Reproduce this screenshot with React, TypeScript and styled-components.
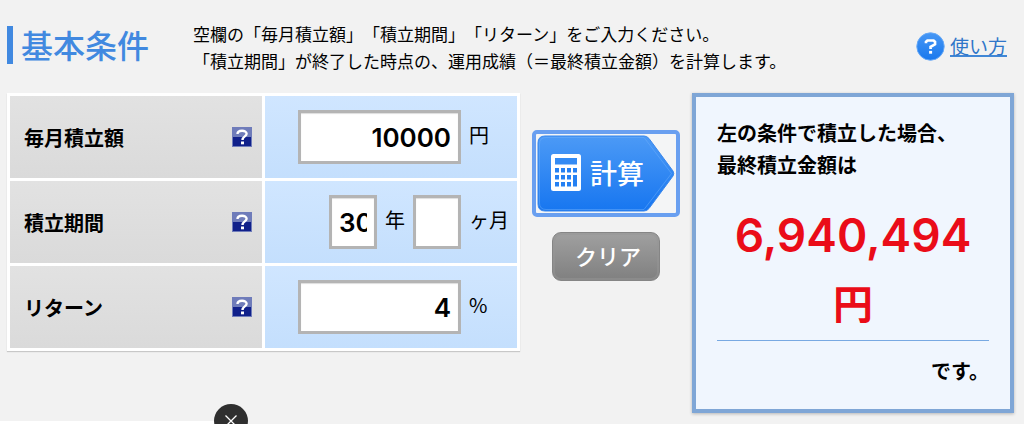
import React, { useState } from "react";
import styled, { createGlobalStyle } from "styled-components";

const GlobalStyle = createGlobalStyle`
  * { box-sizing: border-box; }
  body {
    margin: 0;
    background: #f2f2f2;
    color: #000;
    font-family: "Noto Sans CJK JP", sans-serif;
    text-spacing-trim: space-all;
  }
`;

const Page = styled.div`
  padding: 20px 10px 8px 7px;
`;

const Header = styled.header`
  display: flex;
  align-items: flex-start;
  height: 73px;
`;

const Title = styled.h1`
  flex: none;
  width: 186px;
  margin: 6px 0 0;
  padding: 0 0 2px 8px;
  border-left: 6px solid #4189e0;
  color: #4189e0;
  font-size: 32px;
  line-height: 36px;
  font-weight: 500;
`;

const Lead = styled.p`
  flex: 1;
  margin: 0;
  font-size: 17px;
  line-height: 27px;
`;

const HelpLink = styled.a`
  display: flex;
  align-items: center;
  gap: 5px;
  margin: 12px 7px 0 0;
  color: #2f76c9;
  font-size: 19px;
  line-height: 28px;
  text-decoration: none;

  span {
    line-height: 18px;
    border-bottom: 2px solid #4187d6;
  }
`;

const Columns = styled.main`
  display: grid;
  grid-template-columns: minmax(0, 513fr) 172px minmax(0, 322fr);
  align-items: start;
`;

const Conditions = styled.form`
  display: grid;
  gap: 3px;
  padding: 3px;
  background: #fff;
  box-shadow: 0 1px 1px #c8c8c8;
`;

const Row = styled.div`
  display: grid;
  grid-template-columns: minmax(0, 252fr) minmax(0, 253fr);
  gap: 3px;
  height: 82px;
`;

const LabelCell = styled.div`
  display: flex;
  align-items: center;
  justify-content: space-between;
  padding: 0 10px 0 14px;
  background: linear-gradient(#e2e2e2, #dadada);
  font-size: 20px;
  font-weight: 700;
`;

const HelpButton = styled.button`
  display: block;
  width: 20px;
  height: 20px;
  padding: 0;
  border: 0;
  background: none;
  cursor: pointer;

  svg { display: block; }
`;

const FieldCell = styled.div`
  display: grid;
  grid-template-columns: minmax(0, 1fr) 48px;
  gap: 8px;
  align-items: center;
  background: linear-gradient(#d0e6ff, #c4dffd);
`;

const Fields = styled.div`
  display: flex;
  align-items: center;
  justify-content: flex-end;
  gap: 8px;
`;

const Unit = styled.span`
  padding-bottom: 5px;
  font-size: 20px;
  line-height: 28px;
  white-space: nowrap;
`;

const NumberInput = styled.input<{ $short?: boolean }>`
  width: ${(p) => (p.$short ? 48 : 163)}px;
  height: 54px;
  padding: 0 7px;
  border: 3px solid #b4b4b4;
  border-radius: 0;
  background: #fff;
  box-shadow: inset 0 1px 1px #ddd;
  color: #000;
  font: 600 26px Inter, sans-serif;
  text-align: right;
`;

const Actions = styled.div`
  display: flex;
  flex-direction: column;
  align-items: center;
  gap: 15px;
  padding-top: 37px;
`;

const CalcButton = styled.button`
  position: relative;
  display: flex;
  align-items: center;
  width: 148px;
  height: 87px;
  padding: 0 0 2px 15px;
  border: 4px solid #699ff0;
  border-radius: 5px;
  background: #f4f5f6;
  color: #fff;
  font: 500 27px "Noto Sans CJK JP", sans-serif;
  cursor: pointer;
`;

const ArrowShape = styled.svg`
  position: absolute;
  inset: 1px;
  width: 138px;
  height: 77px;
`;

const CalcFace = styled.span`
  position: relative;
  display: flex;
  align-items: center;
  gap: 9px;
`;

const ClearButton = styled.button`
  width: 108px;
  height: 49px;
  padding: 0 0 4px 4px;
  border: 1px solid #858585;
  border-radius: 9px;
  background: linear-gradient(#a0a0a0, #808080);
  box-shadow: inset 0 0 0 2px rgba(150, 150, 150, 0.5);
  color: #fff;
  font: 500 22px "Noto Sans CJK JP", sans-serif;
  cursor: pointer;
`;

const Result = styled.section`
  min-height: 320px;
  padding: 20px 21px 18px;
  border: 4px solid #7fa6d6;
  background: #f0f6fe;
  box-shadow: 0 1px 3px rgba(0, 0, 0, 0.25);
  font-size: 20px;
  line-height: 32px;
  font-weight: 700;

  p { margin: 0; }
`;

const Amount = styled.output`
  display: block;
  margin: 19px 0 0;
  border-bottom: 1px solid #78a9e2;
  color: #ea0c18;
  font: 600 46px/70px Inter, "Noto Sans CJK JP", sans-serif;
  text-align: center;

  span {
    display: block;
    font-size: 40px;
    font-weight: 700;
  }
`;

const Closing = styled.p`
  padding-top: 14px;
  text-align: right;
`;

const Banner = styled.aside`
  position: fixed;
  left: 0;
  bottom: 0;
  width: 231px;
  height: 3px;
  background: #fff;
`;

const CloseButton = styled.button`
  position: absolute;
  top: -17px;
  right: -17px;
  width: 34px;
  height: 34px;
  padding: 0;
  border: 0;
  border-radius: 50%;
  background: #2f2f2f;
  cursor: pointer;

  svg { display: block; }
`;

const HelpSquare = () => (
  <svg width="20" height="20" viewBox="0 0 20 20" aria-hidden="true">
    <rect width="20" height="20" fill="#6f7cba" />
    <rect x="1" y="10" width="18" height="9" fill="#10208a" />
    <path d="M5.5 7C5.5 2.8 14.600 2.800 14.600 6.700C14.600 9.500 10.500 9.300 10.500 13" fill="none" stroke="#fff" strokeWidth="2.4" />
    <rect x="9" y="14.500" width="3" height="2.800" fill="#fff" />
  </svg>
);

const HelpCircle = () => (
  <svg width="29" height="29" viewBox="0 0 29 29" aria-hidden="true">
    <defs>
      <linearGradient id="help-fill" x2="0" y2="1">
        <stop stopColor="#4797f5" />
        <stop offset="1" stopColor="#1878ed" />
      </linearGradient>
    </defs>
    <circle cx="14.5" cy="14.5" r="13.7" fill="url(#help-fill)" stroke="#65a8f7" strokeWidth="1" />
    <path d="M10 11.2V9.8L11.4 8.5H17.6L19 9.8V12.3L14.6 14.8V17" fill="none" stroke="#fff" strokeWidth="2.7" />
    <rect x="13.1" y="18.9" width="3" height="2.8" fill="#fff" />
  </svg>
);

const keyColumns = [4, 10, 16, 22];
const keyRows = [14, 21, 28];

const Calculator = () => (
  <svg width="30" height="37" viewBox="0 0 30 37" aria-hidden="true">
    <rect width="30" height="37" rx="2.5" fill="#fff" />
    <rect x="4" y="4" width="22" height="6.5" fill="#348bf4" />
    {keyRows.map((y, r) =>
      keyColumns.map((x, c) =>
        r === 2 && c === 3 ? null : (
          <rect key={`${x}-${y}`} x={x} y={y} width="4" height={r === 1 && c === 3 ? 11.5 : 4.5} fill="#2581f3" />
        )
      )
    )}
  </svg>
);

interface RowProps {
  id: string;
  label: string;
  unit: string;
  children: React.ReactNode;
}

const ConditionRow = ({ id, label, unit, children }: RowProps) => (
  <Row>
    <LabelCell>
      <label htmlFor={id}>{label}</label>
      <HelpButton type="button" aria-label={`${label}の説明`}>
        <HelpSquare />
      </HelpButton>
    </LabelCell>
    <FieldCell>
      <Fields>{children}</Fields>
      <Unit>{unit}</Unit>
    </FieldCell>
  </Row>
);

export default function App() {
  const [values, setValues] = useState({ amount: "10000", years: "30", months: "", rate: "4" });
  const [total, setTotal] = useState("6,940,494");

  const bind = (key: keyof typeof values) => ({
    value: values[key],
    onChange: (e: React.ChangeEvent<HTMLInputElement>) => setValues({ ...values, [key]: e.target.value }),
  });

  const calculate = () => {
    const months = Number(values.years) * 12 + Number(values.months);
    const rate = Number(values.rate) / 1200;
    const amount = Number(values.amount);
    const sum = rate ? (amount * (Math.pow(1 + rate, months) - 1)) / rate : amount * months;
    setTotal(Math.floor(sum).toLocaleString("en-US"));
  };

  return (
    <>
      <GlobalStyle />
      <Page>
        <Header>
          <Title>基本条件</Title>
          <Lead>
            空欄の「毎月積立額」「積立期間」「リターン」をご入力ください。
            <br />
            「積立期間」が終了した時点の、運用成績（＝最終積立金額）を計算します。
          </Lead>
          <HelpLink href="#help">
            <HelpCircle />
            <span>使い方</span>
          </HelpLink>
        </Header>
        <Columns>
          <Conditions id="conditions" onSubmit={(e) => { e.preventDefault(); calculate(); }}>
            <ConditionRow id="amount" label="毎月積立額" unit="円">
              <NumberInput id="amount" inputMode="numeric" {...bind("amount")} />
            </ConditionRow>
            <ConditionRow id="years" label="積立期間" unit="ヶ月">
              <NumberInput id="years" $short inputMode="numeric" {...bind("years")} />
              <Unit>年</Unit>
              <NumberInput $short aria-label="積立期間（ヶ月）" inputMode="numeric" {...bind("months")} />
            </ConditionRow>
            <ConditionRow id="rate" label="リターン" unit="%">
              <NumberInput id="rate" inputMode="decimal" {...bind("rate")} />
            </ConditionRow>
          </Conditions>
          <Actions>
            <CalcButton type="submit" form="conditions">
              <ArrowShape viewBox="0 0 138 77" aria-hidden="true">
                <defs>
                  <linearGradient id="calc-fill" x2="0" y2="1">
                    <stop stopColor="#4c9af6" />
                    <stop offset="1" stopColor="#1776f0" />
                  </linearGradient>
                </defs>
                <path
                  d="M8 1H107Q110 1 112 3.5L136 36Q137.5 38.5 136 41L112 73.5Q110 76 107 76H8Q1 76 1 69V8Q1 1 8 1Z"
                  fill="url(#calc-fill)"
                  stroke="#3a87ec"
                />
                <path d="M9 2.5H107L134.5 38.5L107 74.5H9Q2.5 74.5 2.5 68V9Q2.5 2.5 9 2.5Z" fill="none" stroke="#6badfa" strokeOpacity=".5" />
              </ArrowShape>
              <CalcFace>
                <Calculator />
                計算
              </CalcFace>
            </CalcButton>
            <ClearButton type="button" onClick={() => setValues({ amount: "", years: "", months: "", rate: "" })}>
              クリア
            </ClearButton>
          </Actions>
          <Result>
            <p>
              左の条件で積立した場合、
              <br />
              最終積立金額は
            </p>
            <Amount>
              {total}
              <span>円</span>
            </Amount>
            <Closing>です。</Closing>
          </Result>
        </Columns>
      </Page>
      <Banner>
        <CloseButton type="button" aria-label="閉じる">
          <svg width="34" height="34" viewBox="0 0 34 34" aria-hidden="true">
            <path d="M11.5 11.5L22.5 22.5M22.5 11.5L11.5 22.5" stroke="#fff" strokeWidth="1.3" />
          </svg>
        </CloseButton>
      </Banner>
    </>
  );
}
